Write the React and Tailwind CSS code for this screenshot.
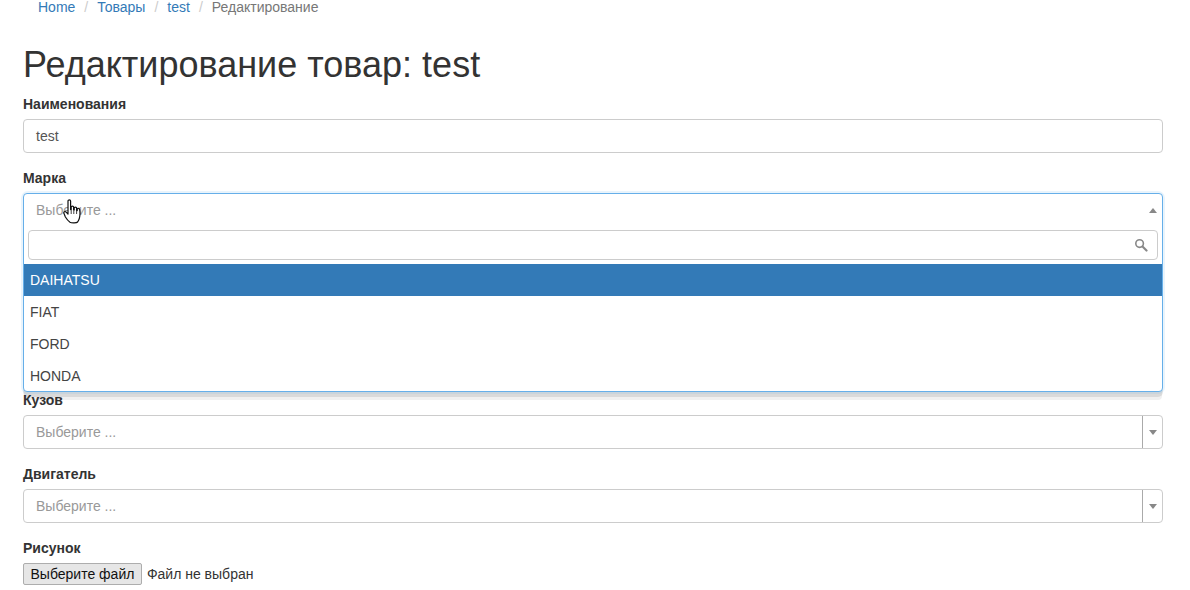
import React from "react";

function Label({ children }) {
  return <label className="block h-5 mb-[5px] text-sm leading-5 font-bold text-[#333]">{children}</label>;
}

function Caret({ up }) {
  return (
    <span
      className={
        up
          ? "w-0 h-0 border-x-4 border-x-transparent border-b-[5px] border-b-[#888]"
          : "w-0 h-0 border-x-4 border-x-transparent border-t-[5px] border-t-[#888]"
      }
    />
  );
}

function SelectField({ label }) {
  return (
    <div className="mb-[15px]">
      <Label>{label}</Label>
      <div className="flex h-[34px] rounded border border-[#ccc] bg-white">
        <span className="flex-1 pl-3 text-sm leading-8 text-[#999]">Выберите ...</span>
        <span className="flex w-5 items-center justify-center border-l border-[#aaa]">
          <Caret />
        </span>
      </div>
    </div>
  );
}

function Hand() {
  return (
    <svg className="absolute left-[39px] top-[5px]" width="19" height="25" viewBox="0 0 19 25">
      <path
        d="M5 2c0-1.5 2.6-1.5 2.6 0v8.6l.6-.1V8c0-1.3 2.4-1.3 2.4 0v2.7l.6.1V9c0-1.3 2.4-1.3 2.4 0v2.4l.6.2V10.3c0-1.3 2.4-1.3 2.4 0 .6 3.4.5 6.6-.3 9.2-.4 1.4-1 2.5-1.7 3.5-.9 1-6 1.2-7.6.2-1.7-1.2-3.4-3.2-4.6-5.2L1 14.6c-.8-1.5 1-2.8 2.2-1.5L5 15z"
        fill="#fff"
        stroke="#111"
        strokeWidth="1.2"
        strokeLinejoin="round"
      />
      <path d="M8.2 11v4M10.8 11v4M13.6 11.5V15" stroke="#111" strokeWidth="0.8" fill="none" />
    </svg>
  );
}

const options = ["DAIHATSU", "FIAT", "FORD", "HONDA"];

export default function App() {
  return (
    <div className="h-[590px] w-[1190px] overflow-hidden bg-white px-[23px] font-['Liberation_Sans',Arial,sans-serif] text-sm text-[#333]">
      <div className="w-[1140px] -mt-[3px]">
        <ol className="flex h-5 pl-[15px] text-sm leading-5">
          <li className="text-[#337ab7]">Home</li>
          <li className="px-[9px] text-[#ccc]">/</li>
          <li className="text-[#337ab7]">Товары</li>
          <li className="px-[9px] text-[#ccc]">/</li>
          <li className="text-[#337ab7]">test</li>
          <li className="px-[9px] text-[#ccc]">/</li>
          <li className="text-[#777]">Редактирование</li>
        </ol>
        <h1 className="mt-[28px] mb-[9px] text-4xl leading-[40px] font-normal text-[#333]">Редактирование товар: test</h1>

        <div className="mb-[15px]">
          <Label>Наименования</Label>
          <div className="h-[34px] rounded border border-[#ccc] pl-[12px] text-sm leading-8 text-[#555]">test</div>
        </div>

        <div className="relative z-10 mb-[163px]">
          <Label>Марка</Label>
          <div className="absolute top-[25px] left-0 right-0 h-[199px] rounded-[5px] bg-white shadow-[0_0_0_2px_rgba(102,175,233,0.14),0_5px_0_0_rgba(0,0,0,0.09),0_9px_0_-1px_rgba(0,0,0,0.06)]">
            <div className="h-full rounded border border-[#66afe9]">
              <div className="relative flex h-[32px] items-center justify-between pl-3 pr-[4px]">
                <span className="text-sm text-[#999]">Выберите ...</span>
                <span className="flex w-[10px] justify-center">
                  <Caret up />
                </span>
                <Hand />
              </div>
              <div className="px-1 pt-[4px] pb-1">
                <div className="flex h-[30px] items-center justify-end rounded border border-[#ccc] pr-[9px]">
                  <svg width="14" height="14" viewBox="0 0 14 14" fill="none" stroke="#888">
                    <circle cx="5.6" cy="5.6" r="3.8" strokeWidth="1.6" />
                    <path d="M8.5 8.5l4 4" strokeWidth="2.2" strokeLinecap="round" />
                  </svg>
                </div>
              </div>
              <ul className="text-sm">
                {options.map((o, i) => (
                  <li
                    key={o}
                    className={
                      i === 0
                        ? "h-8 bg-[#337ab7] px-[6px] leading-8 text-white"
                        : "h-8 px-[6px] leading-8 text-[#444]"
                    }
                  >
                    {o}
                  </li>
                ))}
              </ul>
            </div>
          </div>
          <div className="h-[34px]" />
        </div>

        <SelectField label="Кузов" />
        <SelectField label="Двигатель" />

        <div>
          <Label>Рисунок</Label>
          <div className="flex items-center">
            <button className="h-[22px] rounded-[2px] border border-[#adadad] bg-[#e6e6e6] px-[6.5px] text-sm leading-5 text-[#111]">
              Выберите файл
            </button>
            <span className="ml-[5px] text-sm text-[#333]">Файл не выбран</span>
          </div>
        </div>
      </div>
    </div>
  );
}
